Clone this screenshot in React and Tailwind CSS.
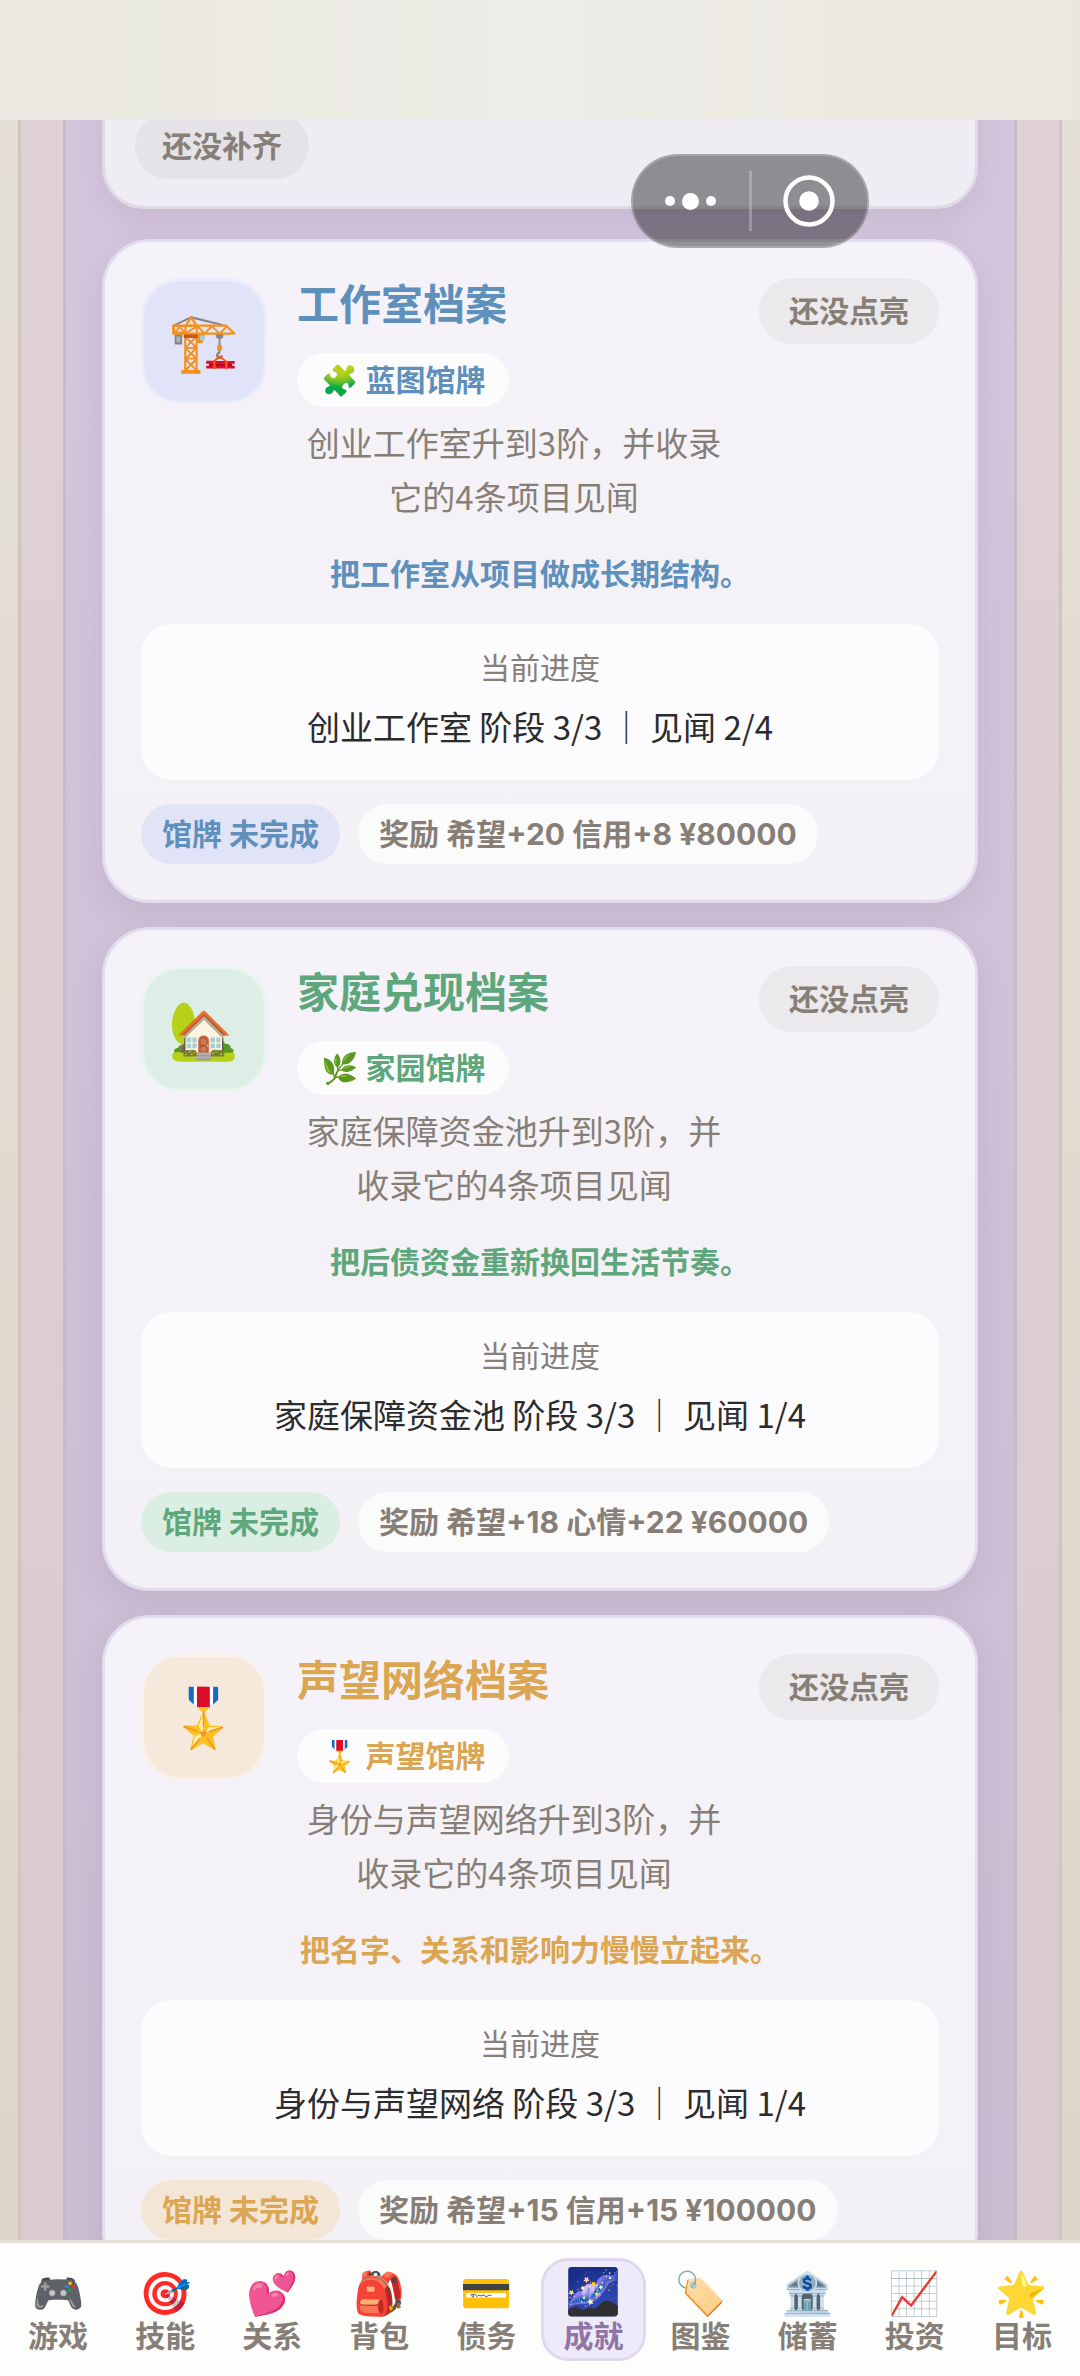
import React, { useState } from 'react';
import clsx from 'clsx';

const ARCHIVES = [
    {
        id: 'studio',
        icon: '🏗️',
        title: '工作室档案',
        badgeIcon: '🧩',
        badge: '蓝图馆牌',
        status: '还没点亮',
        desc: '创业工作室升到3阶，并收录它的4条项目见闻',
        quote: '把工作室从项目做成长期结构。',
        progress: '创业工作室 阶段 3/3 ｜ 见闻 2/4',
        reward: '奖励 希望+20 信用+8 ¥80000',
        text: 'text-[#5f90bc]',
        tile: 'bg-[#e1e4f8] border-[#ecedfa]',
        chip: 'bg-[#e1e3f7]',
    },
    {
        id: 'family',
        icon: '🏡',
        title: '家庭兑现档案',
        badgeIcon: '🌿',
        badge: '家园馆牌',
        status: '还没点亮',
        desc: '家庭保障资金池升到3阶，并收录它的4条项目见闻',
        quote: '把后债资金重新换回生活节奏。',
        progress: '家庭保障资金池 阶段 3/3 ｜ 见闻 1/4',
        reward: '奖励 希望+18 心情+22 ¥60000',
        text: 'text-[#5ea77c]',
        tile: 'bg-[#dceee6] border-[#e9f5f0]',
        chip: 'bg-[#daeee3]',
    },
    {
        id: 'fame',
        icon: '🎖️',
        title: '声望网络档案',
        badgeIcon: '🎖️',
        badge: '声望馆牌',
        status: '还没点亮',
        desc: '身份与声望网络升到3阶，并收录它的4条项目见闻',
        quote: '把名字、关系和影响力慢慢立起来。',
        progress: '身份与声望网络 阶段 3/3 ｜ 见闻 1/4',
        reward: '奖励 希望+15 信用+15 ¥100000',
        text: 'text-[#dba552]',
        tile: 'bg-[#f5e9dc] border-[#f9f1ea]',
        chip: 'bg-[#f4e6d6]',
    },
];

const TABS = [
    { id: 'game', icon: '🎮', label: '游戏' },
    { id: 'skill', icon: '🎯', label: '技能' },
    { id: 'relation', icon: '💕', label: '关系' },
    { id: 'bag', icon: '🎒', label: '背包' },
    { id: 'debt', icon: '💳', label: '债务' },
    { id: 'achievement', icon: '🌌', label: '成就' },
    { id: 'codex', icon: '🏷️', label: '图鉴' },
    { id: 'savings', icon: '🏦', label: '储蓄' },
    { id: 'invest', icon: '📈', label: '投资' },
    { id: 'goal', icon: '🌟', label: '目标' },
];

function ArchiveCard({ archive }) {
    return (
        <article className="rounded-[48px] border-3 border-[#e4dbf0] bg-linear-to-b from-[#f5f3f9] to-[#f3f1f5] p-9 shadow-[0_12px_30px_rgba(120,100,120,0.14)]">
            <div className="flex items-start">
                <div
                    className={clsx('flex size-[126px] shrink-0 items-center justify-center rounded-[39px] border-3 text-[57px] leading-none', archive.tile)}
                    aria-hidden="true"
                >
                    {archive.icon}
                </div>
                <div className="ml-[30px] flex min-w-0 flex-1 flex-col items-start">
                    <h2 className={clsx('text-[42px] leading-[54px] font-bold', archive.text)}>{archive.title}</h2>
                    <span className={clsx('mt-[21px] rounded-full bg-[#fdfcfd] px-6 text-[30px] leading-[54px] font-bold', archive.text)}>
                        {archive.badgeIcon} {archive.badge}
                    </span>
                    <p className="mt-2 w-full text-center font-['Noto_Sans_CJK_SC',sans-serif] text-[33px] leading-[54px] text-[#877f77]">
                        {archive.desc}
                    </p>
                </div>
                <span className="ml-7 shrink-0 rounded-full bg-[#ebe9ec] px-[30px] text-[30px] leading-[66px] font-bold text-[#877f77]">
                    {archive.status}
                </span>
            </div>
            <p className={clsx('mt-[26px] mb-6 text-center text-[30px] leading-[51px] font-bold', archive.text)}>{archive.quote}</p>
            <div className="rounded-[30px] bg-[#fcfbfd] pt-[22px] pb-[26px] text-center font-['Noto_Sans_CJK_SC',sans-serif]">
                <div className="text-[30px] leading-[40px] text-[#877f77]">当前进度</div>
                <div className="mt-3 text-[33px] leading-[56px] text-[#2c2c2c]">{archive.progress}</div>
            </div>
            <div className="mt-6 flex gap-[18px] text-[30px] leading-[60px] font-bold">
                <span className={clsx('rounded-full px-[21px]', archive.text, archive.chip)}>馆牌 未完成</span>
                <span className="rounded-full bg-[#fcfbfc] px-[21px] text-[#877f77]">{archive.reward}</span>
            </div>
        </article>
    );
}

function Capsule() {
    return (
        <div className="absolute top-[154px] right-[211px] flex h-[94px] w-[238px] items-center rounded-full border-2 border-white/20 bg-black/40">
            <button type="button" aria-label="更多" className="flex h-full flex-1 items-center justify-center gap-[7px]">
                <span className="size-[10px] rounded-full bg-white" />
                <span className="size-[17px] rounded-full bg-white" />
                <span className="size-[10px] rounded-full bg-white" />
            </button>
            <span className="h-[60px] w-[3px] bg-white/25" />
            <button type="button" aria-label="关闭" className="flex h-full flex-1 items-center justify-center">
                <svg className="size-[52px]" viewBox="0 0 52 52" aria-hidden="true">
                    <circle cx="26" cy="26" r="23.5" fill="none" stroke="#fff" strokeWidth="4.5" />
                    <circle cx="26" cy="26" r="9.8" fill="#fff" />
                </svg>
            </button>
        </div>
    );
}

function TabBar({ active, onSelect }) {
    return (
        <nav className="flex h-[136px] shrink-0 items-start gap-[3px] border-t-3 border-[#e4e1da] bg-[#fdfdfc] px-[6px] pt-[15px]">
            {TABS.map((tab) => {
                const isActive = tab.id === active;
                return (
                    <button
                        key={tab.id}
                        type="button"
                        onClick={() => onSelect(tab.id)}
                        aria-current={isActive ? 'page' : undefined}
                        className={clsx(
                            'flex h-[103px] min-w-0 flex-1 flex-col items-center justify-end rounded-[27px] border-3 font-bold',
                            isActive ? 'border-[#e0d8f0] bg-[#efeafa] text-[#8f76a6]' : 'border-transparent text-[#877f77]'
                        )}
                    >
                        <span
                            className={clsx(isActive ? 'text-[45px] leading-[48px]' : 'text-[42px] leading-[44px]')}
                            aria-hidden="true"
                        >
                            {tab.icon}
                        </span>
                        <span className="text-[30px] leading-[43px]">{tab.label}</span>
                    </button>
                );
            })}
        </nav>
    );
}

export default function App() {
    const [tab, setTab] = useState('achievement');

    return (
        <div className="relative flex h-screen flex-col overflow-hidden bg-[#e2ddd3] font-['Inter','Noto_Sans_CJK_SC','Noto_Color_Emoji',sans-serif]">
            <header className="h-[120px] shrink-0 bg-linear-to-r from-[#eae8e0] via-[#edece6] to-[#eae7df]" />
            <main className="min-h-0 flex-1 overflow-hidden bg-linear-to-b from-[#e4dfd6] to-[#ddd5c9] px-[18px]">
                <div className="border-x-3 border-[#d3c4c4] bg-linear-to-b from-[#e0d1d6] to-[#d9cacf] px-[42px]">
                    <div className="border-x-3 border-[#cbb9c6] bg-linear-to-b from-[#d4c6de] to-[#cabcd1] px-9">
                        <section className="-mt-12 rounded-b-[42px] border-3 border-[#e0dae6] bg-[#f0ecf4] px-[30px] pt-[38px] pb-[27px] shadow-[0_12px_30px_rgba(120,100,120,0.12)]">
                            <span className="inline-block rounded-full bg-[#e5e2e8] px-[27px] text-[30px] leading-[66px] font-bold text-[#877f77]">还没补齐</span>
                        </section>
                        <div className="mt-[30px] flex flex-col gap-6 pb-9">
                            {ARCHIVES.map((archive) => (
                                <ArchiveCard key={archive.id} archive={archive} />
                            ))}
                        </div>
                    </div>
                </div>
            </main>
            <TabBar active={tab} onSelect={setTab} />
            <Capsule />
        </div>
    );
}
